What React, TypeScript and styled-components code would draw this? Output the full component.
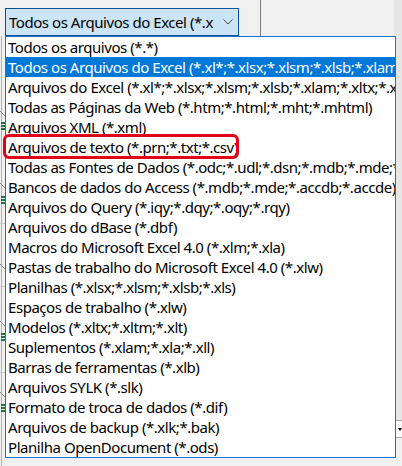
import React from "react";
import styled, { createGlobalStyle } from "styled-components";

const Global = createGlobalStyle`
  html, body { margin: 0; padding: 0; background: #f0f0f0; }
  body { font-family: "Noto Sans", "Open Sans", sans-serif; }
`;

const Page = styled.div`
  position: relative;
  width: 402px;
  height: 466px;
  overflow: hidden;
  background: #f0f0f0;
`;

const TopBar = styled.div`
  display: flex;
  align-items: flex-start;
  height: 36px;
`;

const Combo = styled.div`
  margin: 8px 0 0 5px;
  width: 234px;
  height: 28px;
  box-sizing: border-box;
  background: #cce4f7;
  border: 1px solid #005499;
  display: flex;
  align-items: center;
  padding: 0 5px 0 3px;
  gap: 7px;
`;

const ComboText = styled.span`
  flex: 1;
  overflow: hidden;
  white-space: nowrap;
  font-size: 15px;
  letter-spacing: -0.45px;
  color: #000;
  line-height: 26px;
`;

const Divider = styled.div`
  margin-left: 21px;
  width: 1px;
  height: 36px;
  background: #7d7d7d;
`;

const RightStrip = styled.div`
  position: absolute;
  right: 0;
  top: 0;
  width: 8px;
  height: 420px;
  background: #e6e6e6;
`;

const SpinBox = styled.div`
  position: absolute;
  right: 0;
  top: 420px;
  width: 8px;
  height: 18px;
  box-sizing: border-box;
  background: #fafafa;
  border-top: 1px solid #a8a8a8;
  border-bottom: 1px solid #a8a8a8;
  display: flex;
  align-items: center;
  justify-content: flex-end;
`;

const LeftStrip = styled.svg`
  position: absolute;
  left: 0;
  top: 36px;
`;

const List = styled.ul`
  position: absolute;
  left: 5px;
  top: 36px;
  width: 391px;
  box-sizing: border-box;
  margin: 0;
  padding: 0;
  list-style: none;
  background: #fff;
  border: 1px solid #1a73cf;
`;

const Row = styled.li<{ $selected?: boolean }>`
  position: relative;
  height: 20px;
  line-height: 20px;
  padding-left: 2px;
  font-size: 15px;
  letter-spacing: -0.45px;
  white-space: nowrap;
  color: ${(p) => (p.$selected ? "#fff" : "#000")};
  background: ${(p) => (p.$selected ? "#0078d7" : "transparent")};
`;

const RowText = styled.span`
  display: block;
  overflow: hidden;
`;

const Highlight = styled.span`
  position: absolute;
  left: -3px;
  top: -3px;
  width: 236px;
  height: 25px;
  box-sizing: border-box;
  border: 3px solid #e0001a;
  border-radius: 6px;
  pointer-events: none;
`;

const items = [
  "Todos os arquivos (*.*)",
  "Todos os Arquivos do Excel (*.xl*;*.xlsx;*.xlsm;*.xlsb;*.xlam;*.xltx;*.xltm;*.xls;*.xla;*.xlt;*.xlm;*.xlw)",
  "Arquivos do Excel (*.xl*;*.xlsx;*.xlsm;*.xlsb;*.xlam;*.xltx;*.xltm;*.xls;*.xlt;*.htm;*.html)",
  "Todas as Páginas da Web (*.htm;*.html;*.mht;*.mhtml)",
  "Arquivos XML (*.xml)",
  "Arquivos de texto (*.prn;*.txt;*.csv)",
  "Todas as Fontes de Dados (*.odc;*.udl;*.dsn;*.mdb;*.mde;*.accdb;*.accde)",
  "Bancos de dados do Access (*.mdb;*.mde;*.accdb;*.accde)",
  "Arquivos do Query (*.iqy;*.dqy;*.oqy;*.rqy)",
  "Arquivos do dBase (*.dbf)",
  "Macros do Microsoft Excel 4.0 (*.xlm;*.xla)",
  "Pastas de trabalho do Microsoft Excel 4.0 (*.xlw)",
  "Planilhas (*.xlsx;*.xlsm;*.xlsb;*.xls)",
  "Espaços de trabalho (*.xlw)",
  "Modelos (*.xltx;*.xltm;*.xlt)",
  "Suplementos (*.xlam;*.xla;*.xll)",
  "Barras de ferramentas (*.xlb)",
  "Arquivos SYLK (*.slk)",
  "Formato de troca de dados (*.dif)",
  "Arquivos de backup (*.xlk;*.bak)",
  "Planilha OpenDocument (*.ods)",
];

const greens = [86, 160, 297, 368];
const diags = [75, 147, 228, 285, 356];
const hlines = [187, 250, 336];

function LeftDecor() {
  return (
    <LeftStrip width="6" height="430" viewBox="0 0 6 430">
      <line x1="1.5" y1="0" x2="1.5" y2="430" stroke="#b4b4b4" strokeWidth="1" />
      {hlines.map((y) => (
        <line key={"h" + y} x1="0" y1={y + 0.5} x2="6" y2={y + 0.5} stroke="#c8c8c8" />
      ))}
      {diags.map((y) => (
        <line key={"d" + y} x1="0" y1={y} x2="5" y2={y + 5} stroke="#8a8a8a" strokeWidth="1" />
      ))}
      {greens.map((y) => (
        <g key={"g" + y}>
          <rect x="1" y={y} width="5" height="2" fill="#1e7145" />
          <rect x="1" y={y + 3} width="5" height="2" fill="#1e7145" />
          <rect x="1" y={y + 6} width="5" height="2" fill="#1e7145" />
        </g>
      ))}
    </LeftStrip>
  );
}

function Chevron() {
  return (
    <svg width="10" height="6" viewBox="0 0 10 6">
      <polyline points="0.5,0.5 5,5 9.5,0.5" fill="none" stroke="#4a4a4a" strokeWidth="1" />
    </svg>
  );
}

export default function App() {
  return (
    <>
      <Global />
      <Page>
        <TopBar>
          <Combo>
            <ComboText>Todos os Arquivos do Excel (*.x</ComboText>
            <Chevron />
          </Combo>
          <Divider />
        </TopBar>
        <RightStrip />
        <SpinBox>
          <svg width="4" height="3" viewBox="0 0 4 3">
            <polygon points="0,0 4,0 2,3" fill="#000" />
          </svg>
        </SpinBox>
        <LeftDecor />
        <List>
          {items.map((t, i) => (
            <Row key={t} $selected={i === 1}>
              <RowText>{t}</RowText>
              {i === 5 && <Highlight />}
            </Row>
          ))}
        </List>
      </Page>
    </>
  );
}
